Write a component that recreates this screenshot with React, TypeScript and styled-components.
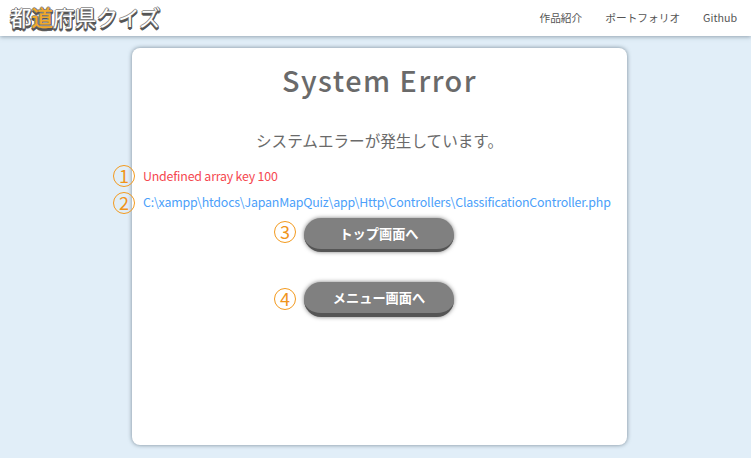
import React from "react";
import styled, { createGlobalStyle } from "styled-components";

const GlobalStyle = createGlobalStyle`
  * { box-sizing: border-box; }
  body {
    margin: 0;
    background: #e1eef8;
    color: #6a6a6a;
    font-family: "Noto Sans CJK JP", sans-serif;
    overflow: hidden;
  }
  h1, p { margin: 0; }
`;

const Page = styled.div`
  height: 458px;
  display: flex;
  flex-direction: column;
  align-items: center;
`;

const Header = styled.header`
  width: 100%;
  height: 36px;
  flex: none;
  display: flex;
  align-items: center;
  justify-content: space-between;
  padding: 0 14px 0 10px;
  background: #fff;
  box-shadow: 0 1px 4px rgba(70, 90, 105, 0.5);
`;

const Logo = styled.a`
  margin-top: -3px;
  font-size: 21.6px;
  line-height: 34px;
  font-weight: 400;
  color: #fff;
  white-space: nowrap;
  text-shadow: 1px 0 #666, -1px 0 #888, 0 -1px #999, 1px 1px #555,
    0 2px #555, 1px 2px #555, -1px 2px #555, 0 3px #666;
`;

const LogoAccent = styled.span`
  color: #f0a92b;
  font-weight: 500;
`;

const Nav = styled.nav`
  display: flex;
  gap: 23px;
`;

const NavLink = styled.a`
  font-size: 10.7px;
  line-height: 36px;
  font-weight: 400;
  color: #555;
  white-space: nowrap;
`;

const Card = styled.main`
  width: 495px;
  height: 397px;
  flex: none;
  margin: 12px 0 0 8px;
  display: flex;
  flex-direction: column;
  align-items: center;
  border-radius: 8px;
  background: #fff;
  box-shadow: 0 0 4px rgba(60, 80, 95, 0.65);
`;

const Title = styled.h1`
  margin-top: 10px;
  font-size: 28.8px;
  line-height: 44px;
  font-weight: 500;
  letter-spacing: 1.5px;
  white-space: nowrap;
`;

const Message = styled.p`
  margin-top: 26px;
  font-size: 15.6px;
  line-height: 24px;
  white-space: nowrap;
`;

const Detail = styled.div<{ $color: string; $gap: number }>`
  position: relative;
  align-self: flex-start;
  margin: ${(p) => p.$gap}px 0 0 11px;
  font-size: 12.4px;
  line-height: 20px;
  letter-spacing: -0.2px;
  color: ${(p) => p.$color};
  white-space: nowrap;
`;

const ActionRow = styled.div<{ $gap: number }>`
  position: relative;
  margin: ${(p) => p.$gap}px 1px 0 0;
`;

const Button = styled.button`
  display: block;
  width: 150px;
  height: 34px;
  padding: 1px 0 0;
  border: 0;
  border-bottom: 3px solid #555;
  border-radius: 17px;
  background: #808080;
  box-shadow: 0 0 4px rgba(0, 0, 0, 0.5);
  color: #fff;
  font: 700 13.2px/28px "Noto Sans CJK JP", sans-serif;
`;

const TallButton = styled(Button)`
  height: 35px;
  border-bottom-width: 4px;
`;

const Marker = styled.span<{ $left: number; $top: number }>`
  position: absolute;
  left: ${(p) => p.$left}px;
  top: ${(p) => p.$top}px;
  width: 22px;
  height: 22px;
  border: 1px solid #f39a1e;
  border-radius: 50%;
  color: #f0941a;
  font-size: 18px;
  line-height: 19px;
  letter-spacing: 0;
  text-align: center;
`;

export default function App() {
  return (
    <>
      <GlobalStyle />
      <Page>
        <Header>
          <Logo>
            都<LogoAccent>道</LogoAccent>府県クイズ
          </Logo>
          <Nav>
            <NavLink>作品紹介</NavLink>
            <NavLink>ポートフォリオ</NavLink>
            <NavLink>Github</NavLink>
          </Nav>
        </Header>
        <Card>
          <Title>System Error</Title>
          <Message>システムエラーが発生しています。</Message>
          <Detail $color="#f5474f" $gap={14}>
            <Marker $left={-30} $top={-1}>1</Marker>
            Undefined array key 100
          </Detail>
          <Detail $color="#4c9ffa" $gap={6}>
            <Marker $left={-30} $top={0}>2</Marker>
            C:\xampp\htdocs\JapanMapQuiz\app\Http\Controllers\ClassificationController.php
          </Detail>
          <ActionRow $gap={6}>
            <Marker $left={-30} $top={3}>3</Marker>
            <Button>トップ画面へ</Button>
          </ActionRow>
          <ActionRow $gap={30}>
            <Marker $left={-30} $top={6}>4</Marker>
            <TallButton>メニュー画面へ</TallButton>
          </ActionRow>
        </Card>
      </Page>
    </>
  );
}
